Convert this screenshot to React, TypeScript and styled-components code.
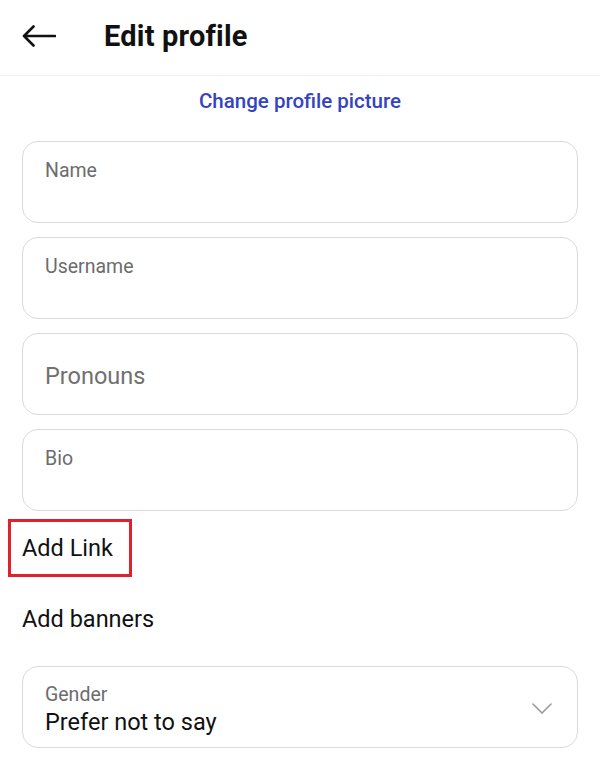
import styled, { createGlobalStyle } from 'styled-components';

const GlobalStyle = createGlobalStyle`
  html, body {
    margin: 0;
    padding: 0;
    background: #fff;
  }
  body {
    font-family: Roboto, "Noto Sans", "Liberation Sans", sans-serif;
    color: #111;
  }
`;

const FIELDS = [
  { key: 'name', label: 'Name', kind: 'top' },
  { key: 'username', label: 'Username', kind: 'top' },
  { key: 'pronouns', label: 'Pronouns', kind: 'placeholder' },
  { key: 'bio', label: 'Bio', kind: 'top' },
] as const;

const BackArrow = () => (
  <svg width="34" height="22" viewBox="0 0 34 22" fill="none">
    <path
      d="M33 11H2M11.5 1.5L2 11l9.5 9.5"
      stroke="#111"
      strokeWidth="2.6"
      strokeLinecap="round"
      strokeLinejoin="round"
    />
  </svg>
);

const Chevron = () => (
  <svg width="20" height="11" viewBox="0 0 20 11" fill="none">
    <path d="M1 1l9 9 9-9" stroke="#9a9a9a" strokeWidth="1.6" strokeLinecap="round" />
  </svg>
);

const App = () => {
  return (
    <Page>
      <GlobalStyle />
      <Header>
        <BackButton aria-label="Back">
          <BackArrow />
        </BackButton>
        <Title>Edit profile</Title>
      </Header>

      <ChangePicture>Change profile picture</ChangePicture>

      <Fields>
        {FIELDS.map((f) =>
          f.kind === 'placeholder' ? (
            <Field key={f.key} $center>
              <Placeholder>{f.label}</Placeholder>
            </Field>
          ) : (
            <Field key={f.key}>
              <Label>{f.label}</Label>
            </Field>
          )
        )}
      </Fields>

      <Highlight>
        <RowText>Add Link</RowText>
      </Highlight>

      <Banners>Add banners</Banners>

      <SelectField>
        <SelectText>
          <Label>Gender</Label>
          <Value>Prefer not to say</Value>
        </SelectText>
        <Chevron />
      </SelectField>
    </Page>
  );
};

export default App;

/* ================= STYLES ================= */

const Page = styled.div`
  width: 600px;
  min-height: 768px;
  background: #fff;
`;

const Header = styled.div`
  height: 76px;
  display: flex;
  align-items: center;
  border-bottom: 1px solid #f1f1f1;
  box-sizing: border-box;
  padding-left: 22px;
`;

const BackButton = styled.div`
  width: 34px;
  height: 22px;
  display: flex;
  margin-top: -4px;
`;

const Title = styled.h1`
  margin: 0 0 4px 48px;
  font-size: 29px;
  font-weight: 700;
  color: #111;
  letter-spacing: 0.2px;
`;

const ChangePicture = styled.div`
  margin-top: 13px;
  text-align: center;
  font-size: 20.5px;
  line-height: 24px;
  font-weight: 500;
  color: #3443c2;
`;

const Fields = styled.div`
  margin: 28px 22px 0;
  display: flex;
  flex-direction: column;
  gap: 14px;
`;

const Field = styled.div<{ $center?: boolean }>`
  height: 82px;
  box-sizing: border-box;
  border: 1.5px solid #dadada;
  border-radius: 16px;
  padding: ${(p) => (p.$center ? '0 22px' : '17px 22px 0')};
  display: flex;
  align-items: ${(p) => (p.$center ? 'center' : 'flex-start')};
`;

const Label = styled.div`
  font-size: 19.5px;
  line-height: 23px;
  color: #6c6c6c;
`;

const Placeholder = styled.div`
  font-size: 23.5px;
  line-height: 26px;
  color: #707070;
  margin-top: 3px;
`;

const Highlight = styled.div`
  margin: 8px 0 0 8px;
  width: 124px;
  height: 58px;
  box-sizing: border-box;
  border: 3px solid #e0202c;
  display: flex;
  align-items: center;
  padding-left: 11px;
`;

const RowText = styled.div`
  font-size: 23.5px;
  line-height: 26px;
  color: #111;
`;

const Banners = styled(RowText)`
  margin: 29px 0 0 22px;
`;

const SelectField = styled.div`
  margin: 34px 22px 0;
  height: 82px;
  box-sizing: border-box;
  border: 1.5px solid #dadada;
  border-radius: 16px;
  padding: 3px 25px 0 22px;
  display: flex;
  align-items: center;
  justify-content: space-between;
`;

const SelectText = styled.div`
  display: flex;
  flex-direction: column;
  gap: 3px;
`;

const Value = styled.div`
  font-size: 23.5px;
  line-height: 26px;
  color: #111;
`;
